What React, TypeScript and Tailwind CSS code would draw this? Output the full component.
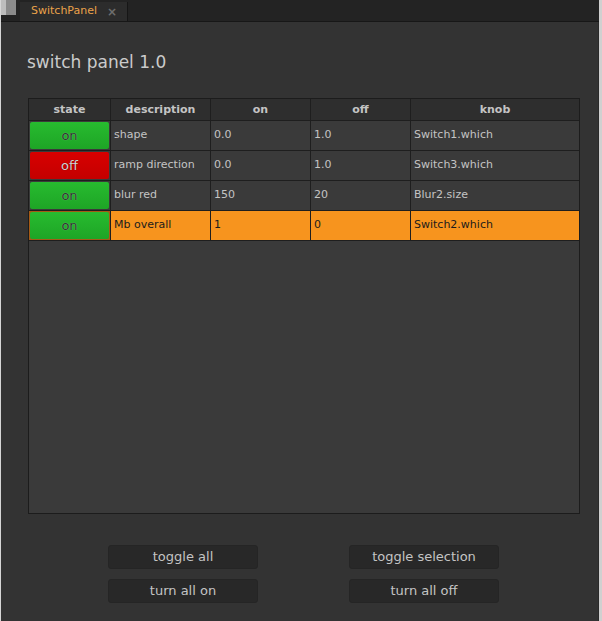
import React from "react";

const font = { fontFamily: '"DejaVu Sans", "Liberation Sans", sans-serif' };

type Row = { state: boolean; desc: string; on: string; off: string; knob: string; sel?: boolean };

const rows: Row[] = [
  { state: true, desc: "shape", on: "0.0", off: "1.0", knob: "Switch1.which" },
  { state: false, desc: "ramp direction", on: "0.0", off: "1.0", knob: "Switch3.which" },
  { state: true, desc: "blur red", on: "150", off: "20", knob: "Blur2.size" },
  { state: true, desc: "Mb overall", on: "1", off: "0", knob: "Switch2.which", sel: true },
];

function Cell({ children, sel }: { children: React.ReactNode; sel?: boolean }) {
  return (
    <div
      className={
        "flex items-center pl-[3px] text-[11px] " +
        (sel ? "bg-[#f7941e] text-[#1c1c1c]" : "bg-[#3a3a3a] text-[#c4c4c4]")
      }
    >
      {children}
    </div>
  );
}

function Btn({ children }: { children: React.ReactNode }) {
  return (
    <div className="flex h-[24px] w-[150px] items-center justify-center rounded-[3px] border border-[#252525] bg-[#282828] text-[13px] text-[#c4c4c4]">
      {children}
    </div>
  );
}

export default function App() {
  return (
    <div className="flex h-[621px] w-[602px] bg-[#333333]" style={font}>
      <div className="w-px bg-[#d6d6d6]" />
      <div className="flex flex-1 flex-col">
        <div className="flex h-[21px] bg-[#232323]">
          <div className="flex h-[15px] w-[15px]">
            <div className="w-[5px] bg-[#bdbdbd]" />
            <div className="flex-1 bg-[#8a8a8a]" />
          </div>
          <div className="w-[4px]" />
          <div className="mt-[2px] flex h-[19px] w-[108px] items-center border-r border-[#161616] bg-[#2c2c2c] pl-[11px]">
            <span className="text-[11px] text-[#eaa24a]">SwitchPanel</span>
            <span className="ml-[10px] text-[12px] font-bold text-[#6e6e6e]">×</span>
          </div>
        </div>
        <div className="h-px bg-[#171717]" />
        <div className="flex flex-1">
          <div className="flex flex-1 flex-col">
            <div className="pl-[26px] pt-[30px] text-[17px] leading-[20px] text-[#cbcbcb]">switch panel 1.0</div>
            <div className="ml-[27px] mt-[26px] flex h-[416px] w-[552px] flex-col border border-[#1c1c1c] bg-[#3a3a3a]">
              <div className="grid grid-cols-[81px_99px_99px_99px_168px] gap-px bg-[#1e1e1e] pb-px">
                {["state", "description", "on", "off", "knob"].map((h) => (
                  <div
                    key={h}
                    className="flex h-[21px] items-center justify-center bg-[#2e2e2e] pt-px text-[11px] font-bold text-[#c4c4c4]"
                  >
                    {h}
                  </div>
                ))}
                {rows.map((r, i) => (
                  <React.Fragment key={i}>
                    <div className={"flex h-[29px] p-px " + (r.sel ? "bg-[#a45a16]" : "bg-[#3a3a3a]")}>
                      <div
                        className={
                          "flex flex-1 items-center justify-center rounded-[2px] text-[13px] " +
                          (r.state
                            ? "bg-gradient-to-b from-[#27bb2f] to-[#1ea526] text-[#333333]"
                            : "bg-gradient-to-b from-[#d80000] to-[#c40000] text-[#d2d2d2]")
                        }
                        style={{
                          textShadow: r.state
                            ? "0 0 1px rgba(255,255,255,0.45)"
                            : "0 0 1px rgba(0,0,0,0.5)",
                        }}
                      >
                        {r.state ? "on" : "off"}
                      </div>
                    </div>
                    <Cell sel={r.sel}>{r.desc}</Cell>
                    <Cell sel={r.sel}>{r.on}</Cell>
                    <Cell sel={r.sel}>{r.off}</Cell>
                    <Cell sel={r.sel}>{r.knob}</Cell>
                  </React.Fragment>
                ))}
              </div>
            </div>
            <div className="ml-[107px] mt-[31px] grid w-[391px] grid-cols-[150px_150px] justify-between gap-y-[10px]">
              <Btn>toggle all</Btn>
              <Btn>toggle selection</Btn>
              <Btn>turn all on</Btn>
              <Btn>turn all off</Btn>
            </div>
          </div>
          <div className="w-px bg-[#2a2a2a]" />
        </div>
      </div>
      <div className="w-[3px] bg-[#d0d0d0]" />
    </div>
  );
}
